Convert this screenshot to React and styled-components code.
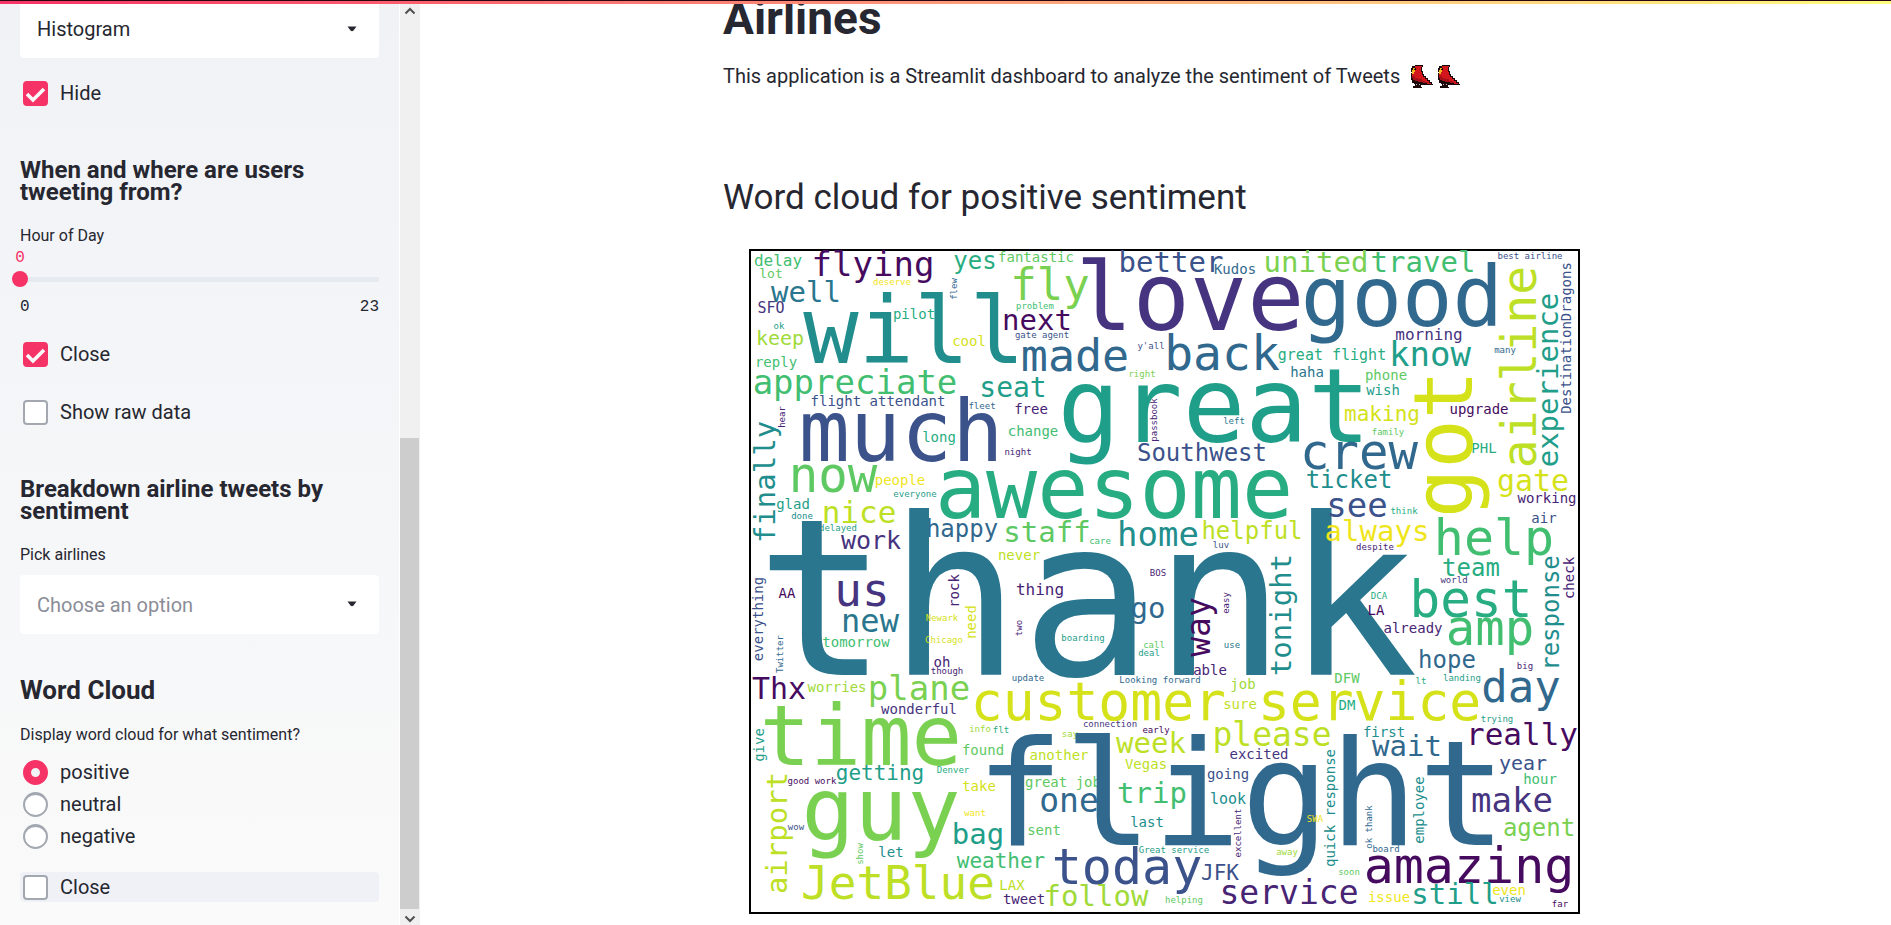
import React, { useState } from 'react';
import styled, { createGlobalStyle } from 'styled-components';

const sans = '"Roboto", "Liberation Sans", sans-serif';
const mono = '"Liberation Mono", monospace';
const cloudMono = '"DejaVu Sans Mono", monospace';
const pink = '#f63366';
const ink = '#262730';

const Global = createGlobalStyle`
  *, *::before, *::after { box-sizing: border-box; }
  body { margin: 0; background: #fff; color: ${ink}; font-family: ${sans}; }
  h1, h2, h3, p { margin: 0; }
`;

const Page = styled.div`
  display: flex;
  height: 100vh;
  overflow: hidden;
`;

const Decoration = styled.div`
  position: fixed;
  inset: 0 0 auto 0;
  z-index: 2;
  height: 4px;
  border-top: 1px solid #2b0610;
  background: linear-gradient(to right, ${pink}, #ffb37f 62%, #fffd80);
`;

const Sidebar = styled.aside`
  flex: 0 0 420px;
  display: flex;
  background: linear-gradient(#f0f2f6, #fafafa);
`;

const SidebarContent = styled.div`
  flex: 1;
  padding: 0 20px;
  border-right: 1px solid #fff;
`;

const ScrollBar = styled.div`
  flex: 0 0 20px;
  display: flex;
  flex-direction: column;
  align-items: center;
  justify-content: space-between;
  padding: 7px 0 2px;
  background: #f0f0f0;
`;

const ScrollThumb = styled.div`
  flex: 0 0 51.4%;
  width: 19px;
  margin: auto 1px 6px 0;
  background: #cdcdcd;
`;

const SelectBox = styled.div`
  position: relative;
  margin-top: ${(p) => p.$top || 0}px;

  svg {
    position: absolute;
    right: 22px;
    top: 26px;
    pointer-events: none;
  }
`;

const Select = styled.select`
  display: block;
  width: 100%;
  height: ${(p) => p.$height}px;
  padding: 0 17px;
  border: 0;
  border-radius: 4px;
  appearance: none;
  background: #fff;
  color: ${(p) => (p.$muted ? '#8b8d98' : ink)};
  font: 20px ${sans};
`;

const Option = styled.label`
  display: flex;
  align-items: center;
  gap: 12px;
  height: ${(p) => p.$height || 30}px;
  margin-top: ${(p) => p.$top || 0}px;
  padding-left: 3px;
  border-radius: 4px;
  background: ${(p) => (p.$active ? '#f0f1f6' : 'transparent')};
  font-size: 20px;
  line-height: 24px;
`;

const Check = styled.input`
  width: 25px;
  height: 25px;
  margin: 0;
  appearance: none;
  border: 2px solid #a3a8b0;
  border-radius: 4px;
  background: #fff;

  &:checked {
    border-color: ${pink};
    background: ${pink} url("data:image/svg+xml,%3Csvg xmlns='http://www.w3.org/2000/svg' viewBox='0 0 21 21'%3E%3Cpath d='M2 11l6 6L19 6' fill='none' stroke='%23fafafa' stroke-width='3.6'/%3E%3C/svg%3E") center / 21px no-repeat;
  }
`;

const Radio = styled.input`
  width: 25px;
  height: 25px;
  margin: 0;
  appearance: none;
  border: 2px solid #a3a8b0;
  border-top-width: 3px;
  border-radius: 50%;
  background: #fff;

  &:checked {
    border: 8px solid ${pink};
    background: #f0f2f6;
  }
`;

const SideHeading = styled.h3`
  margin-top: ${(p) => p.$top}px;
  font-size: ${(p) => p.$size}px;
  line-height: ${(p) => (p.$size > 24 ? 26 : 22)}px;
  font-weight: 700;
`;

const Label = styled.label`
  display: block;
  margin-top: ${(p) => p.$top}px;
  font-size: 16px;
  line-height: 24px;
`;

const SliderValue = styled.output`
  display: block;
  width: 16px;
  margin: 1px 0 0 -8px;
  color: ${pink};
  font: 16px/19px ${mono};
  text-align: center;
`;

const Slider = styled.input`
  display: block;
  width: calc(100% + 16px);
  height: 16px;
  margin: 3px -8px 10px;
  appearance: none;
  background: linear-gradient(#e6eaf1, #e6eaf1) center / calc(100% - 16px) 5px no-repeat;

  &::-webkit-slider-thumb {
    appearance: none;
    width: 16px;
    height: 16px;
    border-radius: 50%;
    background: ${pink};
  }
`;

const SliderRange = styled.div`
  display: flex;
  justify-content: space-between;
  font: 16px/20px ${mono};
`;

const Group = styled.div`
  margin-top: 9px;
`;

const Main = styled.main`
  flex: 1;
  overflow: hidden;
`;

const Block = styled.div`
  max-width: 865px;
  margin: 0 auto;
`;

const Title = styled.h1`
  font-size: 46px;
  line-height: 36px;
  font-weight: 700;
`;

const Intro = styled.p`
  display: flex;
  align-items: center;
  gap: 4px;
  margin-top: 24px;
  font-size: 20px;
  line-height: 32px;

  svg:first-of-type { margin-left: 7px; }
`;

const Subtitle = styled.h2`
  margin-top: 84px;
  font-size: 35px;
  line-height: 44px;
  font-weight: 400;
`;

const Figure = styled.figure`
  margin: 29px 8px 0 26px;

  svg {
    display: block;
    width: 100%;
    height: auto;
  }
`;

const Word = styled.text`
  font-family: ${cloudMono};
  font-size: ${(p) => p.$size}px;
  fill: ${(p) => p.$color};
  text-anchor: middle;
  white-space: pre;
`;

const viridis = {
  a: '#460b5e', b: '#482475', c: '#463480', d: '#3b528b', e: '#31688e', f: '#2a768e',
  g: '#218e8d', h: '#1f9e89', i: '#27ad81', j: '#42be71', k: '#5ec962', l: '#7ad151',
  m: '#a0da39', n: '#bddf26', o: '#d5e21a', p: '#efe51c',
};

// text, centre x, baseline y, size, colour key
const across = [
  ['delay', 29, 17, 16, 'j'], ['lot', 22, 29, 13, 'k'], ['flying', 124, 27, 34, 'a'], ['yes', 226, 20, 24, 'i'],
  ['fantastic', 287, 13, 14, 'k'], ['well', 57, 53, 29, 'f'], ['deserve', 143, 36, 9, 'p'], ['SFO', 22, 64, 15, 'c'],
  ['will', 165, 114, 92, 'g'], ['pilot', 165, 70, 14, 'i'], ['ok', 30, 80, 9, 'h'], ['keep', 31, 96, 20, 'm'],
  ['cool', 220, 97, 14, 'o'], ['reply', 27, 118, 14, 'j'], ['appreciate', 106, 145, 34, 'j'], ['seat', 264, 148, 28, 'h'],
  ['flight attendant', 129, 157, 14, 'd'], ['fleet', 233, 160, 9, 'e'], ['free', 282, 165, 14, 'b'], ['much', 152, 212, 85, 'd'],
  ['long', 190, 193, 14, 'i'], ['change', 284, 187, 14, 'j'], ['night', 269, 206, 9, 'b'], ['now', 84, 243, 49, 'k'],
  ['people', 151, 236, 14, 'p'], ['awesome', 365, 269, 85, 'i'], ['everyone', 166, 248, 9, 'h'], ['glad', 44, 260, 14, 'h'],
  ['done', 53, 270, 9, 'g'], ['nice', 110, 274, 31, 'n'], ['delayed', 89, 282, 9, 'h'], ['work', 122, 300, 25, 'c'],
  ['happy', 213, 288, 24, 'e'], ['staff', 298, 293, 29, 'k'], ['never', 270, 311, 14, 'n'], ['thank', 338, 426, 220, 'f'],
  ['us', 113, 357, 46, 'c'], ['AA', 38, 349, 14, 'a'], ['new', 121, 383, 32, 'f'], ['tomorrow', 107, 398, 14, 'j'],
  ['Newark', 193, 372, 9, 'o'], ['Chicago', 195, 394, 9, 'o'], ['thing', 291, 346, 16, 'b'], ['oh', 193, 418, 14, 'b'],
  ['though', 198, 425, 9, 'b'], ['update', 279, 432, 9, 'e'], ['Thx', 30, 450, 30, 'a'], ['worries', 88, 443, 14, 'm'],
  ['plane', 170, 451, 34, 'l'], ['love', 441, 81, 95, 'c'], ['better', 422, 23, 29, 'd'], ['Kudos', 486, 25, 14, 'e'],
  ['united', 567, 23, 29, 'l'], ['fly', 301, 51, 44, 'l'], ['problem', 286, 60, 9, 'j'], ['next', 288, 81, 29, 'a'],
  ['gate agent', 293, 89, 9, 'd'], ['made', 326, 122, 45, 'e'], ['y\'all', 402, 100, 9, 'd'], ['back', 473, 121, 48, 'e'],
  ['great flight', 583, 111, 15, 'i'], ['haha', 558, 128, 14, 'f'], ['right', 393, 128, 9, 'l'], ['great', 465, 193, 104, 'h'],
  ['left', 485, 175, 9, 'f'], ['Southwest', 453, 212, 24, 'd'], ['travel', 674, 23, 29, 'j'], ['best airline', 781, 10, 9, 'd'],
  ['good', 653, 77, 84, 'e'], ['morning', 680, 91, 16, 'c'], ['know', 681, 117, 34, 'h'], ['many', 756, 104, 9, 'e'],
  ['phone', 637, 131, 14, 'k'], ['wish', 634, 146, 14, 'h'], ['making', 633, 172, 21, 'o'], ['upgrade', 730, 165, 14, 'a'],
  ['family', 639, 186, 9, 'k'], ['PHL', 735, 204, 14, 'i'], ['crew', 610, 220, 49, 'e'], ['ticket', 600, 239, 24, 'g'],
  ['gate', 784, 242, 30, 'o'], ['working', 798, 254, 14, 'b'], ['see', 608, 268, 34, 'd'], ['think', 655, 265, 9, 'i'],
  ['air', 795, 274, 14, 'd'], ['always', 628, 292, 29, 'p'], ['despite', 626, 301, 9, 'b'], ['help', 745, 306, 50, 'j'],
  ['team', 722, 327, 24, 'i'], ['world', 705, 334, 9, 'c'], ['best', 722, 368, 51, 'i'], ['DCA', 630, 350, 9, 'i'],
  ['LA', 627, 366, 14, 'a'], ['already', 664, 384, 14, 'b'], ['amp', 741, 396, 49, 'j'], ['hope', 698, 419, 24, 'e'],
  ['big', 776, 420, 9, 'b'], ['day', 772, 453, 44, 'e'], ['DFW', 598, 434, 14, 'k'], ['lt', 672, 435, 9, 'i'],
  ['landing', 713, 432, 9, 'h'], ['customer service', 477, 471, 53, 'o'], ['DM', 598, 461, 14, 'i'], ['care', 351, 295, 9, 'j'],
  ['home', 409, 297, 34, 'g'], ['helpful', 503, 290, 24, 'n'], ['luv', 472, 299, 9, 'd'], ['BOS', 409, 327, 9, 'b'],
  ['go', 399, 369, 29, 'e'], ['boarding', 334, 392, 9, 'h'], ['call', 405, 399, 9, 'k'], ['deal', 400, 407, 9, 'h'],
  ['use', 483, 399, 9, 'f'], ['able', 461, 426, 14, 'b'], ['Looking forward', 411, 434, 9, 'e'], ['job', 494, 440, 14, 'm'],
  ['sure', 491, 460, 14, 'n'], ['wonderful', 170, 465, 14, 'c'], ['time', 112, 516, 84, 'l'], ['info', 231, 483, 9, 'm'],
  ['flt', 252, 484, 9, 'i'], ['connection', 361, 478, 9, 'c'], ['early', 407, 484, 9, 'a'], ['say', 321, 488, 9, 'm'],
  ['found', 234, 506, 14, 'k'], ['another', 310, 511, 14, 'n'], ['week', 402, 504, 29, 'n'], ['Vegas', 397, 520, 14, 'n'],
  ['getting', 131, 531, 21, 'h'], ['Denver', 204, 524, 9, 'i'], ['good work', 63, 535, 9, 'a'], ['wow', 47, 581, 9, 'd'],
  ['take', 230, 542, 14, 'o'], ['great job', 314, 538, 14, 'k'], ['guy', 132, 591, 88, 'l'], ['one', 320, 563, 33, 'e'],
  ['want', 226, 567, 9, 'p'], ['sent', 295, 586, 14, 'k'], ['bag', 229, 595, 29, 'h'], ['weather', 252, 619, 21, 'j'],
  ['let', 142, 608, 14, 'g'], ['JetBlue', 149, 650, 46, 'n'], ['LAX', 263, 641, 14, 'n'], ['tweet', 275, 655, 14, 'b'],
  ['follow', 347, 657, 29, 'm'], ['flight', 492, 596, 147, 'e'], ['trip', 403, 554, 29, 'j'], ['last', 398, 578, 14, 'g'],
  ['Great service', 425, 604, 9, 'h'], ['today', 378, 635, 50, 'd'], ['please', 523, 497, 33, 'n'], ['excited', 510, 510, 14, 'c'],
  ['going', 479, 530, 14, 'd'], ['look', 479, 555, 15, 'g'], ['SWA', 566, 573, 9, 'p'], ['away', 538, 606, 9, 'm'],
  ['soon', 600, 626, 9, 'k'], ['JFK', 471, 631, 21, 'd'], ['helping', 435, 654, 9, 'k'], ['service', 540, 655, 33, 'b'],
  ['first', 635, 488, 14, 'g'], ['wait', 658, 507, 29, 'e'], ['trying', 748, 473, 9, 'h'], ['really', 773, 496, 31, 'a'],
  ['year', 774, 521, 20, 'd'], ['hour', 791, 535, 14, 'j'], ['make', 763, 563, 34, 'c'], ['agent', 790, 587, 24, 'l'],
  ['board', 637, 603, 9, 'e'], ['amazing', 720, 634, 50, 'a'], ['issue', 640, 653, 14, 'p'], ['still', 706, 655, 29, 'h'],
  ['even', 760, 646, 14, 'p'], ['view', 761, 653, 9, 'g'], ['far', 811, 658, 9, 'a'],
];

// text, baseline x, centre y, size, colour key; read from bottom to top
const upward = [
  ['flew', 208, 40, 9, 'e'], ['hear', 36, 168, 9, 'b'], ['finally', 26, 233, 29, 'g'], ['rock', 210, 342, 14, 'b'],
  ['everything', 14, 370, 14, 'd'], ['Twitter', 34, 405, 9, 'e'], ['need', 227, 373, 14, 'o'], ['two', 273, 379, 9, 'b'],
  ['passbook', 408, 171, 9, 'b'], ['airline', 787, 118, 48, 'n'], ['experience', 809, 131, 29, 'h'],
  ['DestinationDragons', 822, 89, 14, 'd'], ['got', 723, 195, 82, 'o'], ['check', 825, 329, 14, 'b'],
  ['response', 810, 364, 24, 'g'], ['way', 461, 378, 33, 'a'], ['easy', 480, 354, 9, 'b'], ['tonight', 542, 366, 29, 'g'],
  ['give', 15, 496, 14, 'h'], ['airport', 38, 584, 29, 'n'], ['show', 114, 605, 9, 'k'], ['excellent', 492, 584, 9, 'b'],
  ['quick response', 586, 559, 14, 'g'], ['employee', 675, 561, 14, 'g'], ['ok thank', 623, 578, 9, 'e'],
];

function WordCloud() {
  return (
    <svg viewBox="0 0 831 665" role="img" aria-label="Word cloud">
      <rect x="1" y="1" width="829" height="663" fill="#fff" stroke="#000" strokeWidth="2" />
      {across.map(([text, x, y, size, key]) => (
        <Word key={`${text}${x}`} x={x} y={y} $size={size} $color={viridis[key]}>{text}</Word>
      ))}
      {upward.map(([text, x, y, size, key]) => (
        <Word key={`${text}${x}`} transform={`translate(${x} ${y}) rotate(-90)`} $size={size} $color={viridis[key]}>{text}</Word>
      ))}
    </svg>
  );
}

function Caret() {
  return (
    <svg width="10" height="6" viewBox="0 0 10 6" aria-hidden="true">
      <path d="M0.5 0.5h9L6.5 4.6Q5 6 3.5 4.6z" fill={ink} />
    </svg>
  );
}

function Arrow({ down }) {
  return (
    <svg width="12" height="8" viewBox="0 0 12 8" aria-hidden="true">
      <path d={down ? 'M1.5 1.5L6 6l4.5-4.5' : 'M1.5 6.5L6 2l4.5 4.5'} fill="none" stroke="#505050" strokeWidth="2" />
    </svg>
  );
}

function Parrot() {
  return (
    <svg width="23" height="23" viewBox="0 0 23 23" aria-hidden="true">
      <path d="M4 0h8v2h-1v4h1v3h1v2h2v2h2v2h2v2h2v2h1v1H10v2h1v1H2v-2h2v-2H3v-1H1v-3H0V8h1V7H0V3h1V1h3z" fill="#1a0a0c" />
      <path d="M4 1h7v1h-1v5h1v3h1v2h2v2h2v2h2v2h2v1h-4v-1h-3v-1H9v-1H5v-1H3v-2H1V9h1V7h1V5h1z" fill="#d2161c" />
      <path d="M1 11h3v2h3v1h4v2h3v1h3v1h-5v-1H7v-1H4v-1H2v-2H1z" fill="#a50f17" />
      <path d="M2 3h3v2H4v2H3v2H1V5h1z" fill="#f5b71e" />
      <path d="M4 3h1v2H3V4h1z" fill="#1a0a0c" />
      <path d="M5 19h1v1H5zM8 19h1v1H8z" fill="#c9c4bc" />
    </svg>
  );
}

function CheckOption({ label, defaultChecked, ...rest }) {
  return (
    <Option {...rest}>
      <Check type="checkbox" defaultChecked={defaultChecked} />
      {label}
    </Option>
  );
}

export default function App() {
  const [hour, setHour] = useState(0);
  return (
    <Page>
      <Global />
      <Decoration />
      <Sidebar>
        <SidebarContent>
          <SelectBox>
            <Select $height={58} aria-label="Visualization type" defaultValue="Histogram">
              <option>Histogram</option>
            </Select>
            <Caret />
          </SelectBox>
          <CheckOption label="Hide" $top={20} defaultChecked />

          <SideHeading $top={51} $size={24}>When and where are users tweeting from?</SideHeading>
          <Label $top={21} htmlFor="hour">Hour of Day</Label>
          <SliderValue htmlFor="hour">{hour}</SliderValue>
          <Slider id="hour" type="range" min="0" max="23" value={hour} onChange={(e) => setHour(Number(e.target.value))} />
          <SliderRange><span>0</span><span>23</span></SliderRange>
          <CheckOption label="Close" $top={22} defaultChecked />
          <CheckOption label="Show raw data" $top={28} />

          <SideHeading $top={51} $size={24}>Breakdown airline tweets by sentiment</SideHeading>
          <Label $top={21} htmlFor="airlines">Pick airlines</Label>
          <SelectBox $top={8}>
            <Select id="airlines" $height={59} $muted defaultValue="">
              <option value="">Choose an option</option>
            </Select>
            <Caret />
          </SelectBox>

          <SideHeading $top={43} $size={26}>Word Cloud</SideHeading>
          <Label as="div" $top={20} id="sentiment">Display word cloud for what sentiment?</Label>
          <Group role="radiogroup" aria-labelledby="sentiment">
            {['positive', 'neutral', 'negative'].map((name) => (
              <Option key={name} $height={32}>
                <Radio type="radio" name="sentiment" defaultChecked={name === 'positive'} />
                {name}
              </Option>
            ))}
          </Group>
          <CheckOption label="Close" $top={20} $active />
        </SidebarContent>
        <ScrollBar>
          <Arrow />
          <ScrollThumb />
          <Arrow down />
        </ScrollBar>
      </Sidebar>
      <Main>
        <Block>
          <Title>Airlines</Title>
          <Intro>
            This application is a Streamlit dashboard to analyze the sentiment of Tweets
            <Parrot />
            <Parrot />
          </Intro>
          <Subtitle>Word cloud for positive sentiment</Subtitle>
          <Figure><WordCloud /></Figure>
        </Block>
      </Main>
    </Page>
  );
}
